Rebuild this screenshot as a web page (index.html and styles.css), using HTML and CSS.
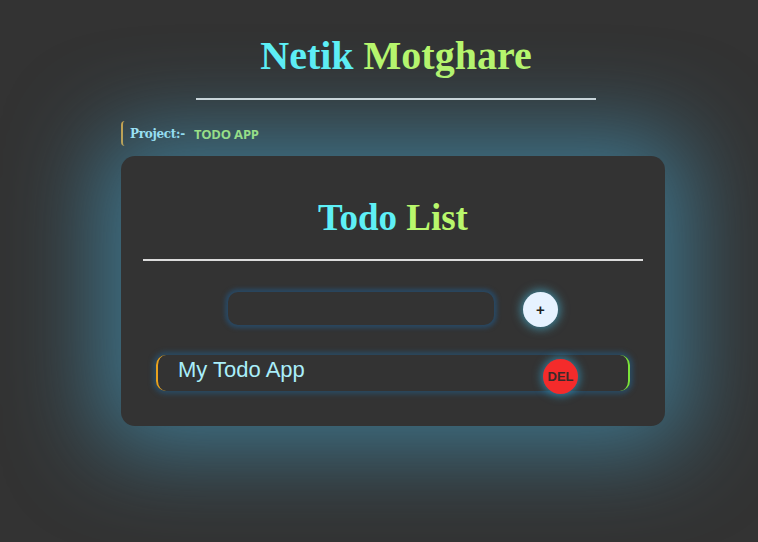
FILE: index.html
```html
<!DOCTYPE html>
<html>
<head>
<meta charset="utf-8">
<link rel="stylesheet" href="styles.css">
</head>
<body>
<main class="page">
  <h1 class="name"><span class="cyan">Netik</span> <span class="green">Motghare</span></h1>
  <div class="rule"></div>
  <div class="project"><span class="project-label">Project:-</span><span class="project-name">TODO APP</span></div>
  <section class="card">
    <h2 class="card-title"><span class="cyan">Todo</span> <span class="green">List</span></h2>
    <div class="card-rule"></div>
    <div class="add-row">
      <input class="todo-input" type="text">
      <button class="add-btn">+</button>
    </div>
    <div class="todo-item">
      <span class="todo-text">My Todo App</span>
      <button class="del-btn">DEL</button>
    </div>
  </section>
</main>
</body>
</html>
```

FILE: styles.css
```css
html, body {
  margin: 0;
  padding: 0;
  background: #333333;
  height: 100%;
  overflow: hidden;
}

.page {
  padding-left: 28px;
  display: flex;
  flex-direction: column;
  align-items: center;
}

.cyan { color: #5ef0f6; }
.green { color: #b9f76c; }

.name {
  font-family: "Liberation Serif", serif;
  font-weight: bold;
  font-size: 40px;
  line-height: 46px;
  margin: 33px 0 0 6px;
}

.rule {
  width: 400px;
  height: 2px;
  background: #dcdcdc;
  margin: 19px 0 0 6px;
}

.project {
  width: 544px;
  margin-top: 21px;
  display: flex;
  justify-content: flex-start;
  align-items: center;
  border-left: 2px solid #d9a13a;
  border-radius: 4px;
  box-sizing: border-box;
  height: 25px;
  padding-left: 7px;
}

.project-label {
  font-family: "DejaVu Serif", serif;
  font-weight: bold;
  font-size: 12px;
  color: #b4f2ff;
  letter-spacing: -0.3px;
}

.project-name {
  font-family: "Open Sans", sans-serif;
  font-weight: bold;
  font-size: 13px;
  color: #b9f76c;
  margin-left: 9px;
  letter-spacing: -0.2px;
}

.card {
  width: 544px;
  height: 270px;
  box-sizing: border-box;
  margin-top: 10px;
  background: #333333;
  border-radius: 14px;
  box-shadow: 0 0 90px 24px rgba(70, 165, 205, 0.58);
  padding: 22px 22px 0;
  display: flex;
  flex-direction: column;
  align-items: center;
}

.card-title {
  font-family: "Liberation Serif", serif;
  font-weight: bold;
  font-size: 37px;
  line-height: 44px;
  margin: 18px 0 0 0;
}

.card-rule {
  align-self: stretch;
  height: 2px;
  background: #dcdcdc;
  margin-top: 19px;
}

.add-row {
  display: flex;
  align-items: center;
  gap: 29px;
  margin-top: 29px;
}

.todo-input {
  width: 266px;
  height: 33px;
  box-sizing: border-box;
  background: #333333;
  border: none;
  border-radius: 10px;
  box-shadow: 0 0 4px 3px rgba(40, 75, 105, 0.9);
  outline: none;
}

.add-btn {
  width: 35px;
  height: 35px;
  border-radius: 50%;
  border: none;
  background: #e6f2ff;
  color: #222;
  font-family: "Liberation Sans", sans-serif;
  font-weight: bold;
  font-size: 15px;
  padding: 0;
  box-shadow: 0 0 10px 2px rgba(70, 170, 200, 0.7);
  margin-top: 2px;
}

.todo-item {
  width: 474px;
  height: 36px;
  box-sizing: border-box;
  margin-top: 28px;
  border-left: 2px solid #e8a21f;
  border-right: 2px solid #7ce33a;
  border-radius: 10px;
  box-shadow: 0 0 5px 3px rgba(40, 80, 110, 0.8);
  display: flex;
  align-items: center;
  padding-left: 20px;
  position: relative;
}

.todo-text {
  font-family: "Liberation Sans", sans-serif;
  font-size: 22px;
  color: #a9eefa;
  margin-top: -6px;
}

.del-btn {
  position: absolute;
  left: 385px;
  top: 4px;
  width: 35px;
  height: 35px;
  border-radius: 50%;
  border: none;
  background: #f42b2b;
  color: #3a2a2a;
  font-family: "Liberation Sans", sans-serif;
  font-weight: bold;
  font-size: 13px;
  padding: 0;
  box-shadow: 0 0 8px 2px rgba(50, 150, 190, 0.7);
}
```
